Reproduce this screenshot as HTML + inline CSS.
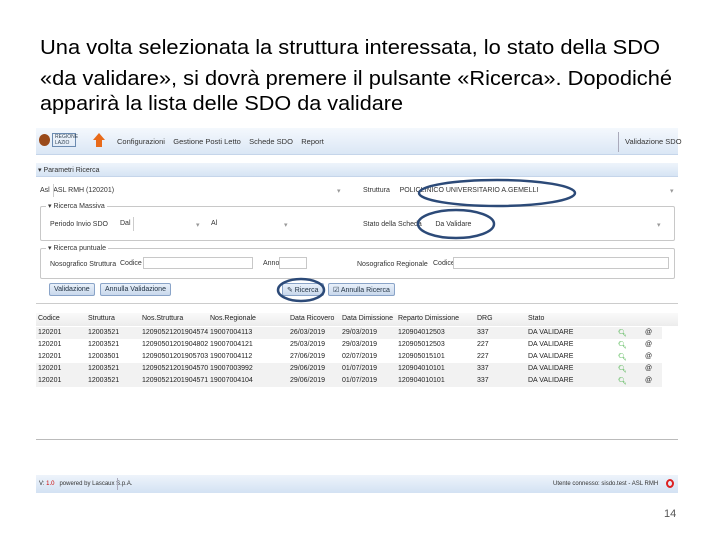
<!DOCTYPE html>
<html><head><meta charset="utf-8"><style>
*{margin:0;padding:0;box-sizing:border-box}
body{width:720px;height:540px;background:#fff;position:relative;overflow:hidden;font-family:"Liberation Sans",sans-serif}
.a{position:absolute;white-space:nowrap}
.s{font-size:7px;color:#333}
.inp{position:absolute;border:1px solid #c8c8c8;background:#fff;height:12px}
.btn{position:absolute;border:1px solid #8aa4c8;background:linear-gradient(#e8f0fa,#c9d8ec);border-radius:2px;height:13px;font-size:7px;color:#234;padding:2px 4px}
.row{position:absolute;left:36px;width:626px;height:12px;font-size:7px;color:#222}
.row span{position:absolute;top:2px}
.fs{position:absolute;border:1px solid #c8c8c8;border-radius:2px}
</style></head><body>
<svg class="a" style="left:0;top:0" width="720" height="120">
<g font-family="Liberation Sans, sans-serif" font-size="20" fill="#000">
<text x="40" y="54" textLength="620" lengthAdjust="spacingAndGlyphs">Una volta selezionata la struttura interessata, lo stato della SDO</text>
<text x="40" y="85" textLength="632" lengthAdjust="spacingAndGlyphs">«da validare», si dovrà premere il pulsante «Ricerca». Dopodiché</text>
<text x="40" y="110" textLength="363" lengthAdjust="spacingAndGlyphs">apparirà la lista delle SDO da validare</text>
</g></svg>

<div class="a" style="left:36px;top:128px;width:642px;height:27px;background:linear-gradient(#f4f8fd,#dbe7f5);border-bottom:1px solid #c5d5ea"></div>
<div class="a" style="left:39px;top:134px;width:11px;height:12px;border-radius:50%;background:#9a4a1a"></div>
<div class="a" style="left:52px;top:133px;width:24px;height:14px;border:1px solid #6a8ab0;font-size:5px;color:#345;line-height:6px;padding-left:2px">REGIONE<br>LAZIO</div>
<div class="a" style="left:93px;top:133px;width:0;height:0;border-left:6px solid transparent;border-right:6px solid transparent;border-bottom:7px solid #e86a1a"></div>
<div class="a" style="left:96px;top:140px;width:6px;height:7px;background:#e86a1a"></div>
<div class="a s" style="left:117px;top:137px;font-size:7.5px">Configurazioni&nbsp;&nbsp;&nbsp;&nbsp;Gestione Posti Letto&nbsp;&nbsp;&nbsp;&nbsp;Schede SDO&nbsp;&nbsp;&nbsp;&nbsp;Report</div>
<div class="a" style="left:618px;top:132px;width:1px;height:20px;background:#aab"></div>
<div class="a s" style="left:625px;top:137px;font-size:7.5px">Validazione SDO</div>

<div class="a" style="left:36px;top:163px;width:642px;height:14px;background:linear-gradient(#eef4fb,#d6e4f4);border-bottom:1px solid #c5d5ea"></div>
<div class="a s" style="left:38px;top:166px">▾ Parametri Ricerca</div>
<div class="a s" style="left:40px;top:187px">Asl&nbsp; ASL RMH (120201)</div>
<div class="a" style="left:53px;top:184px;width:1px;height:13px;background:#ccc"></div>
<div class="a s" style="left:337px;top:187px;color:#999">▾</div>
<div class="a s" style="left:363px;top:187px">Struttura&nbsp;&nbsp;&nbsp;&nbsp;&nbsp;POLICLINICO UNIVERSITARIO A.GEMELLI</div>
<div class="a s" style="left:670px;top:187px;color:#999">▾</div>

<div class="fs" style="left:40px;top:206px;width:635px;height:35px"></div>
<div class="a s" style="left:46px;top:202px;background:#fff;padding:0 2px">▾ Ricerca Massiva</div>
<div class="a s" style="left:50px;top:221px">Periodo Invio SDO</div>
<div class="a s" style="left:120px;top:220px">Dal</div>
<div class="a" style="left:133px;top:217px;width:70px;height:14px;border-left:1px solid #ccc"></div>
<div class="a s" style="left:196px;top:221px;color:#999">▾</div>
<div class="a s" style="left:211px;top:220px">Al</div>
<div class="a s" style="left:284px;top:221px;color:#999">▾</div>
<div class="a s" style="left:363px;top:221px">Stato della Scheda&nbsp;&nbsp;&nbsp;&nbsp;&nbsp;&nbsp;&nbsp;Da Validare</div>
<div class="a s" style="left:657px;top:221px;color:#999">▾</div>

<div class="fs" style="left:40px;top:248px;width:635px;height:31px"></div>
<div class="a s" style="left:46px;top:244px;background:#fff;padding:0 2px">▾ Ricerca puntuale</div>
<div class="a s" style="left:50px;top:261px">Nosografico Struttura</div>
<div class="a s" style="left:120px;top:260px">Codice</div>
<div class="inp" style="left:143px;top:257px;width:110px"></div>
<div class="a s" style="left:263px;top:260px">Anno</div>
<div class="inp" style="left:279px;top:257px;width:28px"></div>
<div class="a s" style="left:357px;top:261px">Nosografico Regionale</div>
<div class="a s" style="left:433px;top:260px">Codice</div>
<div class="inp" style="left:453px;top:257px;width:216px"></div>

<div class="btn" style="left:49px;top:283px">Validazione</div>
<div class="btn" style="left:100px;top:283px">Annulla Validazione</div>
<div class="btn" style="left:282px;top:283px">✎ Ricerca</div>
<div class="btn" style="left:328px;top:283px">☑ Annulla Ricerca</div>
<div class="a" style="left:36px;top:303px;width:642px;height:1px;background:#ccc"></div>

<div class="a" style="left:36px;top:313px;width:642px;height:1px;background:#ccc"></div>
<div class="row" style="top:313px;height:13px;background:linear-gradient(#fafafa,#ececec);width:642px">
<span style="left:2px">Codice</span><span style="left:52px">Struttura</span><span style="left:106px">Nos.Struttura</span><span style="left:174px">Nos.Regionale</span><span style="left:254px">Data Ricovero</span><span style="left:306px">Data Dimissione</span><span style="left:362px">Reparto Dimissione</span><span style="left:441px">DRG</span><span style="left:492px">Stato</span></div>
<div class="row" style="top:327px;background:#f2f2f2"><span style="left:2px">120201</span><span style="left:52px">12003521</span><span style="left:106px">12090521201904574</span><span style="left:174px">19007004113</span><span style="left:254px">26/03/2019</span><span style="left:306px">29/03/2019</span><span style="left:362px">120904012503</span><span style="left:441px">337</span><span style="left:492px">DA VALIDARE</span><span style="left:582px;color:#3a3">🔍︎</span><span style="left:609px">@</span></div>
<div class="row" style="top:339px"><span style="left:2px">120201</span><span style="left:52px">12003521</span><span style="left:106px">12090501201904802</span><span style="left:174px">19007004121</span><span style="left:254px">25/03/2019</span><span style="left:306px">29/03/2019</span><span style="left:362px">120905012503</span><span style="left:441px">227</span><span style="left:492px">DA VALIDARE</span><span style="left:582px;color:#3a3">🔍︎</span><span style="left:609px">@</span></div>
<div class="row" style="top:351px"><span style="left:2px">120201</span><span style="left:52px">12003501</span><span style="left:106px">12090501201905703</span><span style="left:174px">19007004112</span><span style="left:254px">27/06/2019</span><span style="left:306px">02/07/2019</span><span style="left:362px">120905015101</span><span style="left:441px">227</span><span style="left:492px">DA VALIDARE</span><span style="left:582px;color:#3a3">🔍︎</span><span style="left:609px">@</span></div>
<div class="row" style="top:363px;background:#f2f2f2"><span style="left:2px">120201</span><span style="left:52px">12003521</span><span style="left:106px">12090521201904570</span><span style="left:174px">19007003992</span><span style="left:254px">29/06/2019</span><span style="left:306px">01/07/2019</span><span style="left:362px">120904010101</span><span style="left:441px">337</span><span style="left:492px">DA VALIDARE</span><span style="left:582px;color:#3a3">🔍︎</span><span style="left:609px">@</span></div>
<div class="row" style="top:375px;background:#f2f2f2"><span style="left:2px">120201</span><span style="left:52px">12003521</span><span style="left:106px">12090521201904571</span><span style="left:174px">19007004104</span><span style="left:254px">29/06/2019</span><span style="left:306px">01/07/2019</span><span style="left:362px">120904010101</span><span style="left:441px">337</span><span style="left:492px">DA VALIDARE</span><span style="left:582px;color:#3a3">🔍︎</span><span style="left:609px">@</span></div>
<div class="a" style="left:36px;top:439px;width:642px;height:1px;background:#bbb"></div>

<div class="a" style="left:36px;top:475px;width:642px;height:18px;background:linear-gradient(#eef4fb,#d3e2f3)"></div>
<div class="a s" style="left:39px;top:481px;font-size:6px">V: <span style="color:#c00">1.0</span>&nbsp;&nbsp; powered by Lascaux S.p.A.</div>
<div class="a" style="left:117px;top:478px;width:1px;height:12px;background:#aab"></div>
<div class="a s" style="left:553px;top:481px;font-size:6px">Utente connesso: sisdo.test - ASL RMH</div>
<div class="a" style="left:666px;top:479px;width:8px;height:9px;border-radius:50%;border:2px solid #d22"></div>

<svg class="a" style="left:0;top:0" width="720" height="540">
<g fill="none" stroke="#2c4a78" stroke-width="2.5">
<ellipse cx="497" cy="193" rx="78" ry="13"/>
<ellipse cx="456" cy="224" rx="38" ry="14"/>
<ellipse cx="301" cy="290" rx="23" ry="11"/>
</g></svg>

<div class="a" style="left:664px;top:508px;font-size:11px;color:#555">14</div>
</body></html>
